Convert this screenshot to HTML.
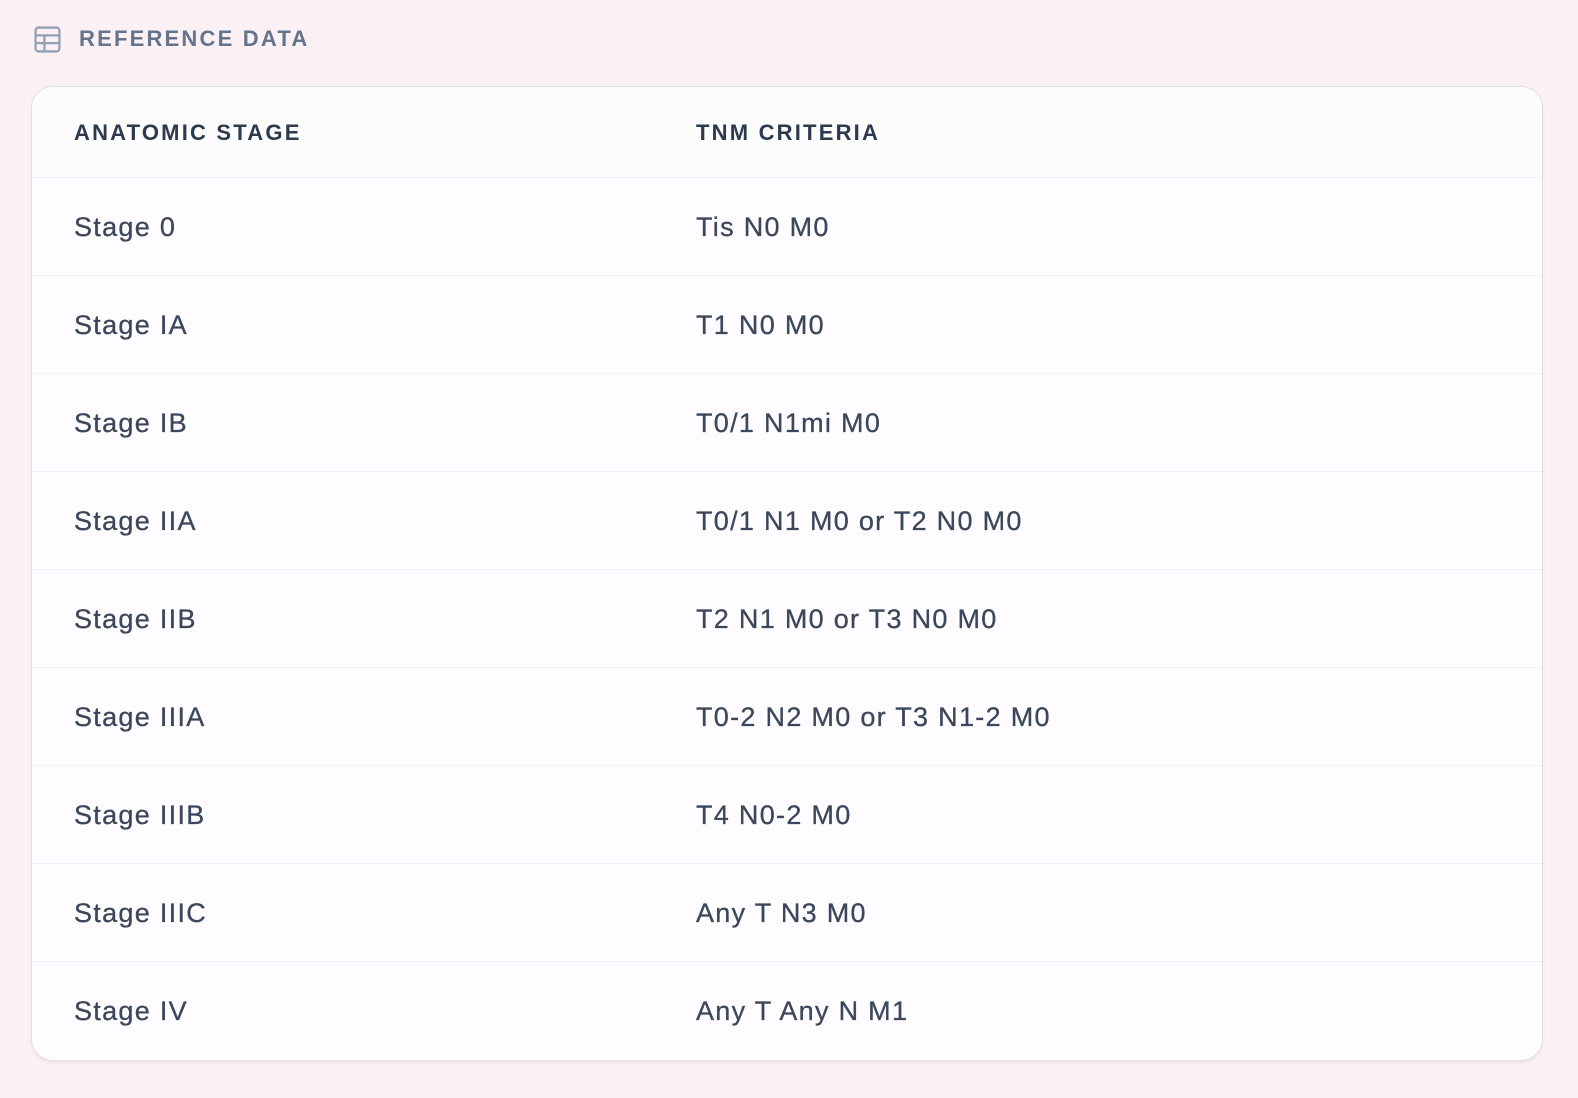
<!DOCTYPE html>
<html><head><style>
body{margin:0;background:#fbf1f5;font-family:"Liberation Sans",sans-serif;width:1578px;height:1098px;overflow:hidden}
.t{position:absolute;left:79px;top:26px;font-size:22px;font-weight:bold;letter-spacing:2.2px;color:#64748b}
.ic{position:absolute;left:34px;top:26px}
.card{position:absolute;left:31px;top:86px;width:1510px;height:973px;background:#fefcfe;border:1.5px solid #e3dfe2;border-radius:22px;box-shadow:0 2px 3px rgba(0,0,0,.06);overflow:hidden}
.h{height:90px;border-bottom:1.5px solid #eef2f7;background:#fcfcfd;position:relative}
.r{height:97px;border-bottom:1.5px solid #eef1f6;position:relative}
.r:last-child{border-bottom:none}
.c1,.c2{position:absolute;top:0}
.h .c1,.h .c2{font-size:22px;font-weight:bold;letter-spacing:2.2px;color:#2d3a4e;line-height:92px}
.r .c1,.r .c2{font-size:27px;color:#3b475b;line-height:98px;letter-spacing:1.3px;-webkit-text-stroke:0.3px #3b475b}
.c1{left:42px}.c2{left:664px}
</style></head><body>
<svg class="ic" width="27" height="27" viewBox="0 0 26 26" fill="none" stroke="#93a1b5" stroke-width="2.2"><rect x="1.5" y="1.5" width="23" height="23" rx="3"/><path d="M1.5 9h23M1.5 16.5h23M10 9v15.5"/></svg>
<div class="t">REFERENCE DATA</div>
<div class="card">
<div class="h"><span class="c1">ANATOMIC STAGE</span><span class="c2">TNM CRITERIA</span></div>
<div class="r"><span class="c1">Stage 0</span><span class="c2">Tis N0 M0</span></div>
<div class="r"><span class="c1">Stage IA</span><span class="c2">T1 N0 M0</span></div>
<div class="r"><span class="c1">Stage IB</span><span class="c2">T0/1 N1mi M0</span></div>
<div class="r"><span class="c1">Stage IIA</span><span class="c2">T0/1 N1 M0 or T2 N0 M0</span></div>
<div class="r"><span class="c1">Stage IIB</span><span class="c2">T2 N1 M0 or T3 N0 M0</span></div>
<div class="r"><span class="c1">Stage IIIA</span><span class="c2">T0-2 N2 M0 or T3 N1-2 M0</span></div>
<div class="r"><span class="c1">Stage IIIB</span><span class="c2">T4 N0-2 M0</span></div>
<div class="r"><span class="c1">Stage IIIC</span><span class="c2">Any T N3 M0</span></div>
<div class="r"><span class="c1">Stage IV</span><span class="c2">Any T Any N M1</span></div>
</div>
</body></html>
